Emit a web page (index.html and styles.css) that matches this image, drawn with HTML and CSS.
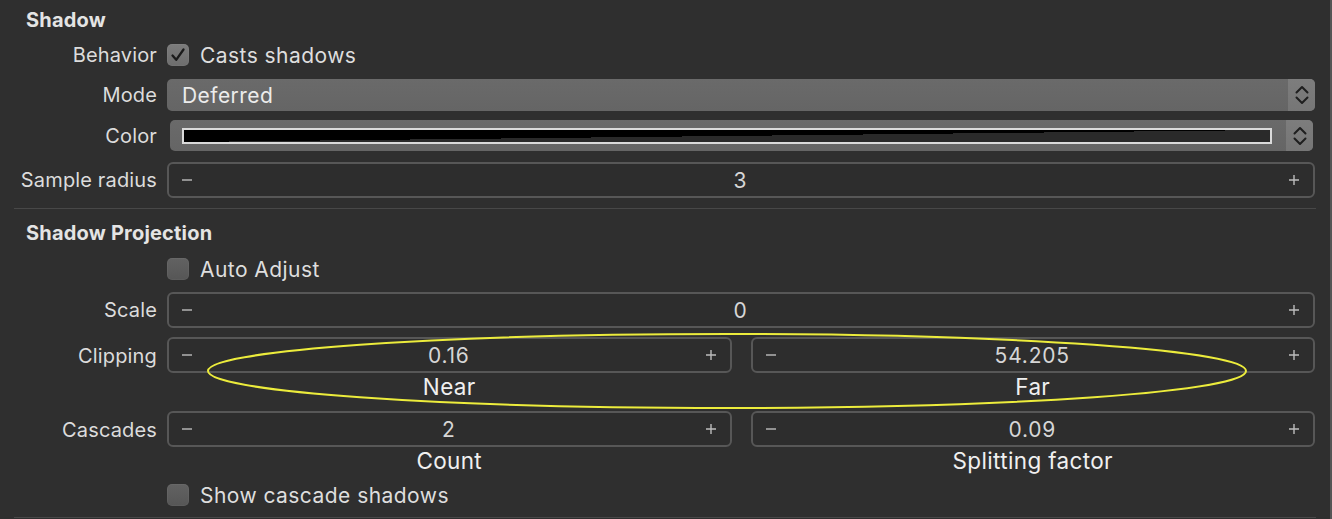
FILE: index.html
```html
<!DOCTYPE html>
<html>
<head>
<meta charset="utf-8">
<title>Shadow</title>
<link rel="stylesheet" href="styles.css">
</head>
<body>
<div class="panel">
  <div class="section-title t1">Shadow</div>

  <div class="row r-behavior">
    <div class="label">Behavior</div>
    <div class="check">
      <span class="box checked">
        <svg width="22" height="22" viewBox="0 0 22 22"><path d="M5.5 11.5 L9.2 15.8 L16.5 5.5" fill="none" stroke="#1b1b1b" stroke-width="2.3" stroke-linecap="round" stroke-linejoin="round"/></svg>
      </span>
      <span class="check-text">Casts shadows</span>
    </div>
  </div>

  <div class="row r-mode">
    <div class="label">Mode</div>
    <div class="popup">
      <span class="popup-text">Deferred</span>
      <span class="popup-arrows">
        <svg width="14" height="20" viewBox="0 0 14 20"><path d="M1.5 7.5 L7 2 L12.5 7.5 M1.5 12.5 L7 18 L12.5 12.5" fill="none" stroke="#1e1e1e" stroke-width="2" stroke-linecap="round" stroke-linejoin="round"/></svg>
      </span>
    </div>
  </div>

  <div class="row r-color">
    <div class="label">Color</div>
    <div class="popup colorwell">
      <span class="swatch-area"><span class="swatch"></span></span>
      <span class="popup-arrows">
        <svg width="14" height="20" viewBox="0 0 14 20"><path d="M1.5 7.5 L7 2 L12.5 7.5 M1.5 12.5 L7 18 L12.5 12.5" fill="none" stroke="#1e1e1e" stroke-width="2" stroke-linecap="round" stroke-linejoin="round"/></svg>
      </span>
    </div>
  </div>

  <div class="row r-sample">
    <div class="label">Sample radius</div>
    <div class="stepper">
      <svg class="minus" width="10" height="10" viewBox="0 0 10 10"><path d="M0 5 H10" stroke="#bdbdbd" stroke-width="1.4"/></svg>
      <span class="value">3</span>
      <svg class="plus" width="10" height="10" viewBox="0 0 10 10"><path d="M0 5 H10 M5 0 V10" stroke="#bdbdbd" stroke-width="1.4"/></svg>
    </div>
  </div>

  <div class="separator"></div>

  <div class="section-title t2">Shadow Projection</div>

  <div class="row r-auto">
    <div class="label"></div>
    <div class="check">
      <span class="box"></span>
      <span class="check-text">Auto Adjust</span>
    </div>
  </div>

  <div class="row r-scale">
    <div class="label">Scale</div>
    <div class="stepper">
      <svg class="minus" width="10" height="10" viewBox="0 0 10 10"><path d="M0 5 H10" stroke="#bdbdbd" stroke-width="1.4"/></svg>
      <span class="value">0</span>
      <svg class="plus" width="10" height="10" viewBox="0 0 10 10"><path d="M0 5 H10 M5 0 V10" stroke="#bdbdbd" stroke-width="1.4"/></svg>
    </div>
  </div>

  <div class="row r-pair r-clipping">
    <div class="label tall">Clipping</div>
    <div class="pair">
      <div class="field">
        <div class="stepper">
          <svg class="minus" width="10" height="10" viewBox="0 0 10 10"><path d="M0 5 H10" stroke="#bdbdbd" stroke-width="1.4"/></svg>
          <span class="value">0.16</span>
          <svg class="plus" width="10" height="10" viewBox="0 0 10 10"><path d="M0 5 H10 M5 0 V10" stroke="#bdbdbd" stroke-width="1.4"/></svg>
        </div>
        <div class="caption">Near</div>
      </div>
      <div class="field">
        <div class="stepper">
          <svg class="minus" width="10" height="10" viewBox="0 0 10 10"><path d="M0 5 H10" stroke="#bdbdbd" stroke-width="1.4"/></svg>
          <span class="value">54.205</span>
          <svg class="plus" width="10" height="10" viewBox="0 0 10 10"><path d="M0 5 H10 M5 0 V10" stroke="#bdbdbd" stroke-width="1.4"/></svg>
        </div>
        <div class="caption">Far</div>
      </div>
    </div>
  </div>

  <div class="row r-pair r-cascades">
    <div class="label tall">Cascades</div>
    <div class="pair">
      <div class="field">
        <div class="stepper">
          <svg class="minus" width="10" height="10" viewBox="0 0 10 10"><path d="M0 5 H10" stroke="#bdbdbd" stroke-width="1.4"/></svg>
          <span class="value">2</span>
          <svg class="plus" width="10" height="10" viewBox="0 0 10 10"><path d="M0 5 H10 M5 0 V10" stroke="#bdbdbd" stroke-width="1.4"/></svg>
        </div>
        <div class="caption">Count</div>
      </div>
      <div class="field">
        <div class="stepper">
          <svg class="minus" width="10" height="10" viewBox="0 0 10 10"><path d="M0 5 H10" stroke="#bdbdbd" stroke-width="1.4"/></svg>
          <span class="value">0.09</span>
          <svg class="plus" width="10" height="10" viewBox="0 0 10 10"><path d="M0 5 H10 M5 0 V10" stroke="#bdbdbd" stroke-width="1.4"/></svg>
        </div>
        <div class="caption">Splitting factor</div>
      </div>
    </div>
  </div>

  <div class="row r-show">
    <div class="label"></div>
    <div class="check">
      <span class="box"></span>
      <span class="check-text">Show cascade shadows</span>
    </div>
  </div>

  <div class="separator"></div>
</div>

<svg class="annotation" width="1332" height="519" viewBox="0 0 1332 519">
  <ellipse cx="727" cy="371" rx="519" ry="37" fill="none" stroke="#ecec3c" stroke-width="2"/>
</svg>
</body>
</html>
```

FILE: styles.css
```css
* {
  box-sizing: border-box;
}

html,
body {
  margin: 0;
  padding: 0;
}

body {
  position: relative;
  width: 1332px;
  height: 519px;
  overflow: hidden;
  background: #2f2f2f;
  color: #dcdcdc;
  font-family: Inter, "Noto Sans", "Liberation Sans", sans-serif;
  font-size: 20px;
}

.panel {
  width: 1332px;
  height: 519px;
  padding-right: 15px;
  border-right: 2px solid #555555;
}

.section-title {
  display: flex;
  align-items: center;
  padding-left: 26px;
  font-size: 20px;
  letter-spacing: 0.2px;
  font-weight: 700;
  color: #e4e4e4;
}

.t1 {
  height: 40px;
}

.t2 {
  height: 45px;
  padding-top: 2px;
}

.row {
  display: grid;
  grid-template-columns: 157px 1fr;
  column-gap: 10px;
  align-items: center;
}

.label {
  text-align: right;
  white-space: nowrap;
  font-size: 20px;
  letter-spacing: 0.15px;
  color: #dcdcdc;
}

.label.tall {
  line-height: 38px;
}

.r-behavior {
  height: 30px;
}

.r-mode {
  height: 50px;
}

.r-color {
  height: 31px;
}

.r-sample {
  height: 57px;
}

.r-auto {
  height: 30px;
}

.r-scale {
  height: 51px;
}

.r-pair {
  align-items: start;
}

.r-clipping {
  padding-top: 2px;
  height: 64px;
}

.r-cascades {
  margin-top: 12px;
  height: 62px;
}

.r-show {
  height: 44px;
}

.separator {
  height: 1px;
  margin-left: 14px;
  margin-right: -1px;
  background: #484848;
}

/* checkbox */
.check {
  display: flex;
  align-items: center;
  gap: 11px;
}

.box {
  display: block;
  width: 22px;
  height: 22px;
  border-radius: 5px;
  background: linear-gradient(#626262, #565656);
  box-shadow: inset 0 0 0 1px rgba(255, 255, 255, 0.04);
}

.box.checked {
  background: linear-gradient(#7c7c7c, #6e6e6e);
}

.box svg {
  display: block;
}

.check-text {
  font-size: 21px;
  letter-spacing: 0.45px;
  color: #dedede;
}

/* popup button */
.popup {
  display: flex;
  align-items: stretch;
  height: 32px;
  border-radius: 5px;
  background: linear-gradient(#6a6a6a, #656565);
  overflow: hidden;
}

.popup-text {
  flex: 1;
  display: flex;
  align-items: center;
  padding-left: 15px;
  font-size: 21px;
  letter-spacing: 0.45px;
  color: #ececec;
}

.popup-arrows {
  display: flex;
  align-items: center;
  justify-content: center;
  width: 27px;
  background: linear-gradient(#7d7d7d, #767676);
}

.popup-arrows svg {
  display: block;
}

.colorwell {
  height: 31px;
  margin: 0 2px 0 3px;
}

.swatch-area {
  flex: 1;
  display: flex;
  align-items: center;
  padding: 0 14px 0 12px;
}

.swatch {
  display: block;
  width: 100%;
  height: 16px;
  border: 2px solid #dadada;
  background: linear-gradient(to bottom right, #000000 50%, #2a2a2a 50%);
}

/* stepper */
.stepper {
  display: flex;
  align-items: center;
  height: 36px;
  padding: 0 14px 0 13px;
  border: 2px solid #575757;
  border-radius: 6px;
  background: #2d2d2d;
}

.stepper svg {
  display: block;
  flex: none;
}

.value {
  flex: 1;
  text-align: center;
  font-size: 21px;
  letter-spacing: 0.8px;
  color: #d6d6d6;
  line-height: 34px;
  padding-top: 2px;
}

.pair {
  display: grid;
  grid-template-columns: 1fr 1fr;
  column-gap: 19px;
}

.caption {
  height: 26px;
  line-height: 28px;
  text-align: center;
  font-size: 22.5px;
  letter-spacing: 0.35px;
  color: #f0f0f0;
}

.annotation {
  position: absolute;
  left: 0;
  top: 0;
  pointer-events: none;
}
```
